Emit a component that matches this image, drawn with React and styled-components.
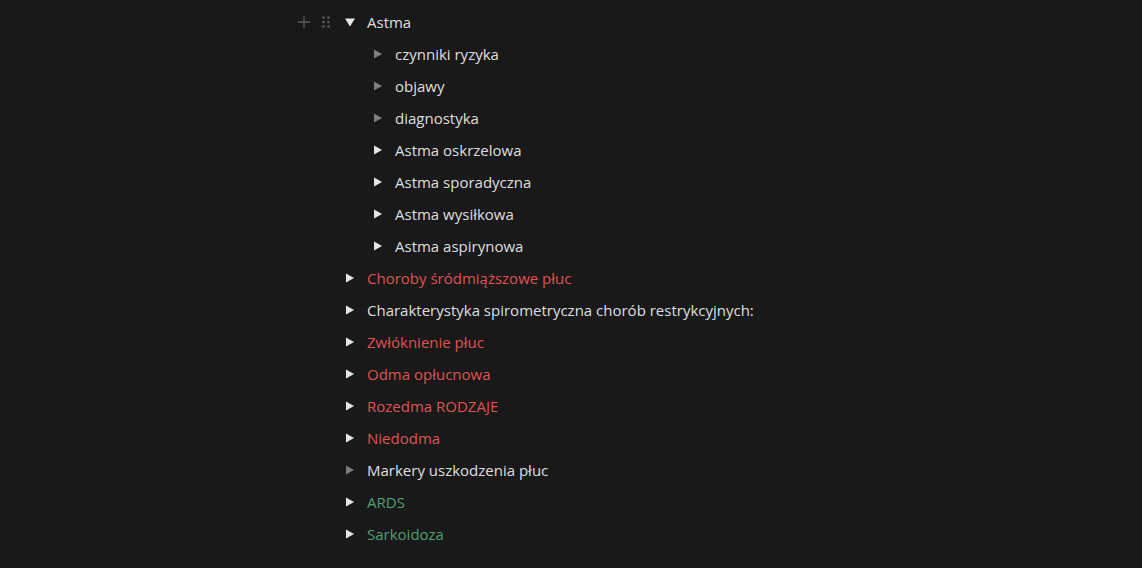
import React from "react";
import styled, { createGlobalStyle } from "styled-components";

const GlobalStyle = createGlobalStyle`
  html, body {
    margin: 0;
    background: #191919;
  }
  body {
    font-family: "Open Sans", "Liberation Sans", sans-serif;
  }
`;

const Page = styled.div`
  min-height: 568px;
  padding: 6px 0 0 338px;
  box-sizing: border-box;
`;

const List = styled.div`
  display: flex;
  flex-direction: column;
`;

const Row = styled.div`
  position: relative;
  display: flex;
  align-items: center;
  height: 32px;
  padding-left: ${(p) => p.level * 28}px;
`;

const Toggle = styled.div`
  width: 24px;
  height: 24px;
  display: flex;
  align-items: center;
  justify-content: center;
  flex-shrink: 0;
  color: ${(p) => (p.empty ? "#7d7d7d" : "#e6e6e6")};
`;

const Label = styled.span`
  margin-left: 5px;
  font-size: 15px;
  line-height: 24px;
  white-space: nowrap;
  color: ${(p) =>
    p.tone === "red" ? "#df5452" : p.tone === "green" ? "#529e72" : "rgba(255,255,255,0.87)"};
`;

const Handles = styled.div`
  position: absolute;
  left: -44px;
  top: 4px;
  display: flex;
  align-items: center;
  gap: 2px;
  color: #5a5a5a;
`;

const HandleBox = styled.div`
  width: 20px;
  height: 24px;
  display: flex;
  align-items: center;
  justify-content: center;
`;

const Arrow = ({ open }) => (
  <svg width="12" height="12" viewBox="0 0 12 12" fill="currentColor">
    {open ? <path d="M1 2.5h10L6 10.5z" /> : <path d="M2 1.5v9l8-4.5z" />}
  </svg>
);

const items = [
  { text: "Astma", level: 0, open: true },
  { text: "czynniki ryzyka", level: 1, empty: true },
  { text: "objawy", level: 1, empty: true },
  { text: "diagnostyka", level: 1, empty: true },
  { text: "Astma oskrzelowa", level: 1 },
  { text: "Astma sporadyczna", level: 1 },
  { text: "Astma wysiłkowa", level: 1 },
  { text: "Astma aspirynowa", level: 1 },
  { text: "Choroby śródmiąższowe płuc", level: 0, tone: "red" },
  { text: "Charakterystyka spirometryczna chorób restrykcyjnych:", level: 0 },
  { text: "Zwłóknienie płuc", level: 0, tone: "red" },
  { text: "Odma opłucnowa", level: 0, tone: "red" },
  { text: "Rozedma RODZAJE", level: 0, tone: "red" },
  { text: "Niedodma", level: 0, tone: "red" },
  { text: "Markery uszkodzenia płuc", level: 0, empty: true },
  { text: "ARDS", level: 0, tone: "green" },
  { text: "Sarkoidoza", level: 0, tone: "green" },
];

export default function App() {
  return (
    <Page>
      <GlobalStyle />
      <List>
        {items.map((it, i) => (
          <Row key={i} level={it.level}>
            {i === 0 && (
              <Handles>
                <HandleBox>
                  <svg width="14" height="14" viewBox="0 0 14 14" stroke="currentColor" strokeWidth="1.3">
                    <path d="M7 1v12M1 7h12" />
                  </svg>
                </HandleBox>
                <HandleBox>
                  <svg width="10" height="14" viewBox="0 0 10 14" fill="currentColor">
                    <circle cx="2.5" cy="2.5" r="1.3" />
                    <circle cx="7.5" cy="2.5" r="1.3" />
                    <circle cx="2.5" cy="7" r="1.3" />
                    <circle cx="7.5" cy="7" r="1.3" />
                    <circle cx="2.5" cy="11.5" r="1.3" />
                    <circle cx="7.5" cy="11.5" r="1.3" />
                  </svg>
                </HandleBox>
              </Handles>
            )}
            <Toggle empty={it.empty}>
              <Arrow open={it.open} />
            </Toggle>
            <Label tone={it.tone}>{it.text}</Label>
          </Row>
        ))}
      </List>
    </Page>
  );
}
